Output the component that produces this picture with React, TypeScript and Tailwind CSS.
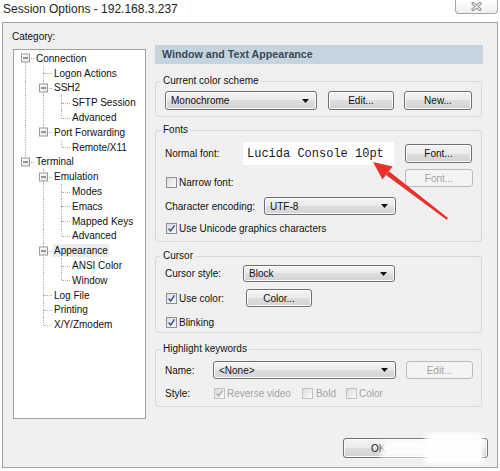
import type { ReactNode } from "react";

const ui = "font-['Liberation_Sans',Arial,sans-serif]";

type TreeNode = { label: string; level: number; open?: boolean; selected?: boolean };

const nodes: TreeNode[] = [
  { label: "Connection", level: 0, open: true },
  { label: "Logon Actions", level: 1 },
  { label: "SSH2", level: 1, open: true },
  { label: "SFTP Session", level: 2 },
  { label: "Advanced", level: 2 },
  { label: "Port Forwarding", level: 1, open: true },
  { label: "Remote/X11", level: 2 },
  { label: "Terminal", level: 0, open: true },
  { label: "Emulation", level: 1, open: true },
  { label: "Modes", level: 2 },
  { label: "Emacs", level: 2 },
  { label: "Mapped Keys", level: 2 },
  { label: "Advanced", level: 2 },
  { label: "Appearance", level: 1, open: true, selected: true },
  { label: "ANSI Color", level: 2 },
  { label: "Window", level: 2 },
  { label: "Log File", level: 1 },
  { label: "Printing", level: 1 },
  { label: "X/Y/Zmodem", level: 1 },
];

function hasNextSibling(i: number) {
  const level = nodes[i].level;
  for (let j = i + 1; j < nodes.length; j++) {
    if (nodes[j].level < level) return false;
    if (nodes[j].level === level) return true;
  }
  return false;
}

function ancestorAt(i: number, level: number) {
  for (let j = i; j >= 0; j--) if (nodes[j].level === level) return j;
  return -1;
}

const dotV = "absolute left-[8px] border-l border-dotted border-[#b2b2b2]";
const dotH = "absolute left-[9px] right-[1px] top-1/2 border-t border-dotted border-[#b2b2b2]";

function TreeRow({ node, index }: { node: TreeNode; index: number }) {
  const cols = [];
  for (let k = 0; k < node.level; k++) {
    const a = ancestorAt(index, k);
    cols.push(
      <div key={k} className="relative w-[18px] h-full shrink-0">
        {hasNextSibling(a) && <span className={`${dotV} top-0 bottom-0`} />}
      </div>
    );
  }
  const first = index === 0;
  return (
    <div className="flex items-center h-[14.8px]">
      {cols}
      <div className="relative w-[18px] h-full shrink-0">
        {!first && <span className={`${dotV} top-0 h-1/2`} />}
        {hasNextSibling(index) && <span className={`${dotV} top-1/2 bottom-0`} />}
        <span className={dotH} />
        {node.open && (
          <span className="absolute left-[4px] top-1/2 -translate-y-1/2 w-[9px] h-[9px] border border-[#9a9a9a] bg-[linear-gradient(135deg,#ffffff,#e2e2e2)] flex items-center justify-center">
            <span className="w-[5px] h-px bg-[#3a3a3a]" />
          </span>
        )}
      </div>
      <span className={`text-[10px] leading-[13px] whitespace-nowrap px-px ${node.selected ? "bg-[#ececec]" : ""}`}>
        {node.label}
      </span>
    </div>
  );
}

function Check({ checked, disabled }: { checked?: boolean; disabled?: boolean }) {
  return (
    <span
      className={`w-[11px] h-[11px] border shrink-0 flex items-center justify-center bg-[linear-gradient(135deg,#dcdcdc,#fbfbfb)] ${
        disabled ? "border-[#c2c2c2]" : "border-[#8e8f8f]"
      }`}
    >
      {checked && (
        <svg width="9" height="9" viewBox="0 0 9 9">
          <path d="M1.6 4.6 L3.6 7 L7.6 1.4" fill="none" stroke={disabled ? "#b0b0b0" : "#3f5a98"} strokeWidth="1.5" />
        </svg>
      )}
    </span>
  );
}

function Button({ label, className, disabled }: { label: string; className: string; disabled?: boolean }) {
  return (
    <div
      className={`flex items-center justify-center rounded-[3px] border text-[10px] shrink-0 ${
        disabled
          ? "border-[#b9bdc0] bg-[#f4f4f4] text-[#a2a2a2]"
          : "border-[#707070] bg-[linear-gradient(#f4f4f4,#ebebeb_50%,#dedede_50%,#d2d2d2)] shadow-[inset_0_0_0_1px_#fbfbfb] text-[#111]"
      } ${className}`}
    >
      {label}
    </div>
  );
}

function Combo({ value, className }: { value: string; className: string }) {
  return (
    <div
      className={`flex items-center justify-between rounded-[3px] border border-[#707070] bg-[linear-gradient(#f4f4f4,#ebebeb_50%,#dedede_50%,#d2d2d2)] shadow-[inset_0_0_0_1px_#fbfbfb] pl-[5px] pr-[7px] text-[10px] shrink-0 ${className}`}
    >
      <span>{value}</span>
      <svg width="7" height="4" viewBox="0 0 7 4">
        <polygon points="0,0 7,0 3.5,4" fill="#111" />
      </svg>
    </div>
  );
}

function Group({ title, className, children }: { title: string; className: string; children: ReactNode }) {
  return (
    <fieldset className={`w-[327px] border border-[#d8d8d8] rounded-[3px] ${className}`}>
      <legend className="ml-[5px] px-[2px] text-[10px] leading-[14px]">{title}</legend>
      {children}
    </fieldset>
  );
}

export default function App() {
  return (
    <div className={`relative w-[500px] h-[471px] bg-white overflow-hidden text-[#111] ${ui}`}>
      {/* title bar */}
      <div className="h-[22px] flex items-start justify-between">
        <div className="pl-[3px] pt-[2px] text-[12px] leading-[15px] text-[#1e1e1e]">Session Options - 192.168.3.237</div>
        <div className="mr-[2px] w-[43px] h-[14px] border border-t-0 border-[#a6a6a6] rounded-b-[4px] bg-[linear-gradient(#ffffff,#eeeeee)] flex items-center justify-center">
          <svg width="11" height="9" viewBox="0 0 11 9">
            <path d="M2 1.5 L9 7.5 M9 1.5 L2 7.5" stroke="#8c8c8c" strokeWidth="3" strokeLinecap="round" />
            <path d="M2 1.5 L9 7.5 M9 1.5 L2 7.5" stroke="#f4f4f4" strokeWidth="1.1" strokeLinecap="round" />
          </svg>
        </div>
      </div>

      {/* dialog body */}
      <div className="ml-[2px] w-[496px] h-[446px] border border-[#a0a0a0] bg-[#f0f0f0] flex flex-col">
        <div className="h-[396px] flex items-start">
          {/* category tree */}
          <div className="pl-[10px] pt-[7px]">
            <div className="-ml-px text-[10px] leading-[14px]">Category:</div>
            <div className="mt-[5px] w-[133px] h-[370px] border border-[#a0a0a0] bg-white pt-px pl-[3px]">
              {nodes.map((n, i) => (
                <TreeRow key={i} node={n} index={i} />
              ))}
            </div>
          </div>

          {/* options panel */}
          <div className="ml-[9px] pt-[22px] w-[328px]">
            <div className="h-[19px] bg-[#c5d4df] pl-[7px] flex items-center text-[10.7px] font-bold text-[#3a4854]">
              Window and Text Appearance
            </div>

            <Group title="Current color scheme" className="mt-[10px]">
              <div className="pl-[9px] pr-[8px] pt-[3px] pb-[6px] flex items-center">
                <Combo value="Monochrome" className="w-[152px] h-[19px]" />
                <Button label="Edit..." className="ml-[11px] w-[66px] h-[19px]" />
                <Button label="New..." className="ml-[10px] w-[68px] h-[19px]" />
              </div>
            </Group>

            <Group title="Fonts" className="mt-[6px]">
              <div className="pl-[9px] pr-[8px] pb-[7px] text-[10px]">
                <div className="mt-[5px] h-[23px] flex items-center">
                  <span className="w-[78px]">Normal font:</span>
                  <div className="w-[151px] h-[23px] bg-white flex items-center pl-[4px] font-['Liberation_Mono','DejaVu_Sans_Mono',monospace] text-[12px] text-[#1a1a1a]">
                    Lucida Console 10pt
                  </div>
                  <Button label="Font..." className="ml-[11px] w-[67px] h-[19px]" />
                </div>
                <div className="h-[23px] flex items-start">
                  <div className="mt-[12px] ml-px flex items-center h-[11px]">
                    <Check />
                    <span className="ml-[2px]">Narrow font:</span>
                  </div>
                  <Button label="Font..." disabled className="ml-auto mt-[4px] w-[68px] h-[18px]" />
                </div>
                <div className="mt-[9px] h-[18px] flex items-center">
                  <span className="w-[99px]">Character encoding:</span>
                  <Combo value="UTF-8" className="w-[132px] h-[18px]" />
                </div>
                <div className="mt-[8px] h-[11px] ml-px flex items-center">
                  <Check checked />
                  <span className="ml-[2px]">Use Unicode graphics characters</span>
                </div>
              </div>
            </Group>

            <Group title="Cursor" className="mt-[7px]">
              <div className="pl-[9px] pr-[8px] pb-[4px] text-[10px]">
                <div className="mt-[2px] h-[17px] flex items-center">
                  <span className="w-[78px]">Cursor style:</span>
                  <Combo value="Block" className="w-[152px] h-[17px]" />
                </div>
                <div className="mt-[7px] h-[18px] flex items-center">
                  <div className="w-[80px] ml-px flex items-center">
                    <Check checked />
                    <span className="ml-[2px]">Use color:</span>
                  </div>
                  <Button label="Color..." className="w-[66px] h-[18px]" />
                </div>
                <div className="mt-[10px] h-[11px] ml-px flex items-center">
                  <Check checked />
                  <span className="ml-[2px]">Blinking</span>
                </div>
              </div>
            </Group>

            <Group title="Highlight keywords" className="mt-[9px]">
              <div className="pl-[9px] pr-[8px] pb-[7px] text-[10px]">
                <div className="mt-[5px] h-[18px] flex items-center">
                  <span className="w-[48px]">Name:</span>
                  <Combo value="<None>" className="w-[183px] h-[18px]" />
                  <Button label="Edit..." disabled className="ml-auto w-[67px] h-[18px]" />
                </div>
                <div className="mt-[9px] h-[11px] flex items-center">
                  <span className="w-[49px]">Style:</span>
                  <Check checked disabled />
                  <span className="ml-[2px] text-[#a4a4a4]">Reverse video</span>
                  <span className="ml-[11px]">
                    <Check disabled />
                  </span>
                  <span className="ml-[3px] text-[#a4a4a4]">Bold</span>
                  <span className="ml-[10px]">
                    <Check disabled />
                  </span>
                  <span className="ml-[2px] text-[#a4a4a4]">Color</span>
                </div>
              </div>
            </Group>
          </div>
        </div>

        {/* dialog buttons */}
        <div className="mt-[19px] flex justify-end pr-[9px]">
          <div className="w-[145px] h-[20px] rounded-[3px] border border-[#707070] bg-[linear-gradient(#f4f4f4,#ebebeb_50%,#dedede_50%,#d2d2d2)] shadow-[inset_0_0_0_1px_#fbfbfb] flex items-center pl-[27px] text-[10px]">
            OK
          </div>
        </div>
      </div>

      {/* watermark patch over the buttons */}
      <div className="absolute left-[381px] top-[441px] w-[50px] h-[17px] bg-white/90 blur-[2px]" />
      <div className="absolute left-[425px] top-[433px] w-[58px] h-[31px] bg-white/95 blur-[2px]" />

      {/* red pointer arrow */}
      <svg className="absolute left-0 top-0" width="500" height="471" viewBox="0 0 500 471">
        <polygon points="373,162 392.5,166.5 382.5,179.5" fill="#e8312a" />
        <polygon points="389,171.2 386,175 446.6,219.8 448,218" fill="#e8312a" />
      </svg>
    </div>
  );
}
